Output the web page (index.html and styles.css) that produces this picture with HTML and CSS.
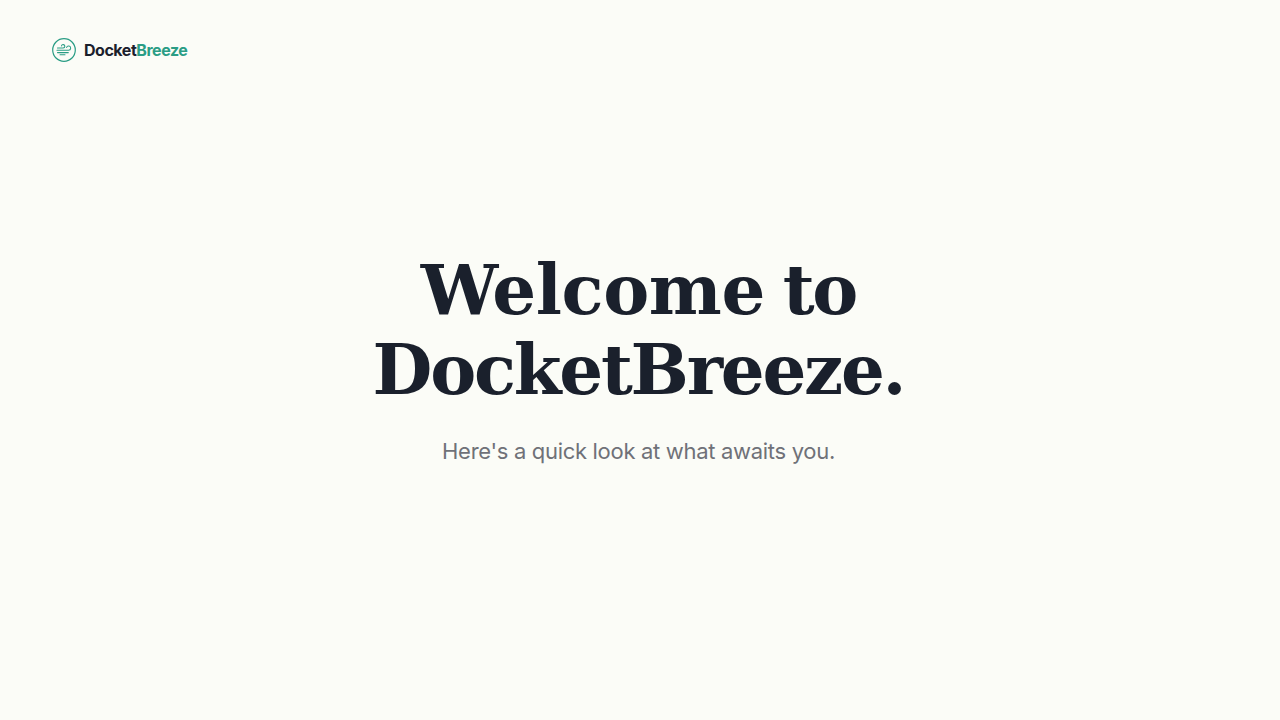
FILE: index.html
```html
<!DOCTYPE html>
<html lang="en">
<head>
<meta charset="utf-8">
<title>DocketBreeze</title>
<link rel="stylesheet" href="styles.css">
</head>
<body>
<div class="page">
  <header class="header">
    <svg class="logo" viewBox="0 0 24 24" fill="none" stroke="#2a9d85" stroke-linecap="round">
      <circle cx="12" cy="12" r="11.3" stroke-width="1.2"/>
      <path d="M5.5 10h5.7a1.7 1.7 0 1 0-1.7-2.1M5 12.2h11.6a2.1 2.1 0 1 0-2-2.8M5.5 14.6h10.8M8 16.8h5" stroke-width="1.05"/>
    </svg>
    <span class="brand">Docket<span class="brand-accent">Breeze</span></span>
  </header>
  <main class="hero">
    <h1 class="title"><span class="title-lead">Welcome</span> to<br>DocketBreeze.</h1>
    <p class="subtitle">Here's a quick look at what awaits you.</p>
  </main>
</div>
</body>
</html>
```
FILE: styles.css
```css
* { box-sizing: border-box; }
html, body { margin: 0; height: 100%; }
body { background: #fbfcf7; font-family: "Inter", "Liberation Sans", sans-serif; }
.page { height: 720px; display: flex; flex-direction: column; overflow: hidden; }
.header { display: flex; align-items: center; gap: 8px; padding: 38px 52px 0; height: 62px; }
.logo { width: 24px; height: 24px; flex: none; }
.brand { font-size: 16px; font-weight: 700; color: #1a202c; letter-spacing: -0.47px; line-height: 24px; }
.brand-accent { color: #2a9d85; }
.hero { flex: 1; display: flex; flex-direction: column; align-items: center; padding: 188px 3px 0 0; }
.title { margin: 0; font-family: "DejaVu Serif", "Liberation Serif", serif; font-weight: 700; font-size: 69px; line-height: 80px; color: #1a202c; text-align: center; letter-spacing: -2.25px; word-spacing: -4px; }
.title-lead { letter-spacing: -0.4px; }
.subtitle { margin: 25px 0 0; font-size: 22px; line-height: 32px; color: #6f7178; letter-spacing: -0.31px; }
```
